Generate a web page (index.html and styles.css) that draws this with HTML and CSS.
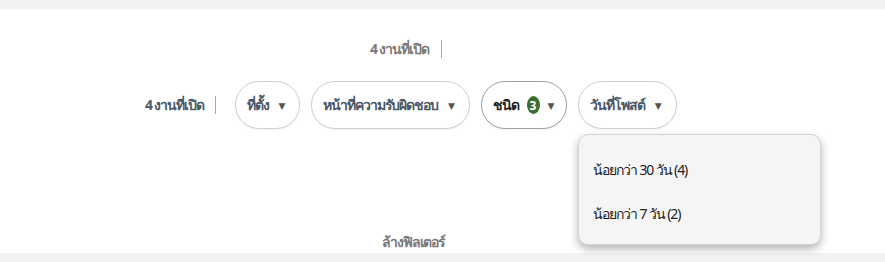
FILE: index.html
```html
<!DOCTYPE html>
<html lang="th">
<head>
    <meta charset="UTF-8">
    <title>ฟิลเตอร์งาน</title>
    <link rel="stylesheet" href="styles.css">
</head>
<body>
    <div class="band"></div>

    <div class="summary">
        <span class="count-muted">4 งานที่เปิด</span>
        <span class="divider"></span>
    </div>

    <div class="filter-bar">
        <span class="count">4 งานที่เปิด</span>
        <span class="divider"></span>

        <button class="pill">ที่ตั้ง <span class="caret">▼</span></button>
        <button class="pill">หน้าที่ความรับผิดชอบ <span class="caret">▼</span></button>
        <button class="pill pill-active"><b>ชนิด</b> <span class="badge">3</span> <span class="caret">▼</span></button>

        <div class="pill-wrap">
            <button class="pill">วันที่โพสต์ <span class="caret">▼</span></button>
            <ul class="menu">
                <li>น้อยกว่า 30 วัน (4)</li>
                <li>น้อยกว่า 7 วัน (2)</li>
            </ul>
        </div>
    </div>

    <div class="clear">ล้างฟิลเตอร์</div>

    <div class="band band-bottom"></div>
</body>
</html>
```

FILE: styles.css
```css
* {
    margin: 0;
    padding: 0;
    box-sizing: border-box;
}

body {
    width: 885px;
    height: 262px;
    background: #fff;
    font-family: 'Noto Sans', 'DejaVu Sans', sans-serif;
    font-size: 14px;
    letter-spacing: -1.1px;
    color: #333;
    position: relative;
    overflow: hidden;
}

.band {
    height: 9px;
    background: #f2f2f2;
}

.band-bottom {
    position: absolute;
    left: 0;
    right: 0;
    bottom: 0;
}

.summary {
    display: flex;
    align-items: center;
    gap: 12px;
    padding: 18px 0 0 370px;
    height: 62px;
}

.count-muted {
    color: #7a7a7a;
    font-weight: bold;
}

.divider {
    width: 1px;
    height: 18px;
    background: #aaa;
}

.filter-bar {
    display: flex;
    align-items: center;
    padding: 10px 0 0 145px;
}

.count {
    color: #4b5866;
    font-weight: bold;
}

.filter-bar .divider {
    margin: 0 19px 0 11px;
}

.pill {
    display: flex;
    align-items: center;
    gap: 10px;
    height: 48px;
    padding: 0 14px 0 11px;
    margin-right: 11px;
    border: 1.5px solid #d0d0d0;
    border-radius: 24px;
    background: #fff;
    font-family: inherit;
    font-size: 14px;
    letter-spacing: -1.1px;
    font-weight: bold;
    color: #4b5866;
    box-shadow: 0 1px 2px rgba(0, 0, 0, 0.06);
}

.pill-active {
    gap: 8px;
    padding-right: 12px;
    border-color: #a0a0a0;
    color: #222;
}

.caret {
    font-size: 9px;
    letter-spacing: 0;
    color: #555;
}

.badge {
    width: 13px;
    height: 18px;
    border-radius: 50%;
    background: #3b6e32;
    color: #fff;
    font-size: 12px;
    letter-spacing: 0;
    display: flex;
    align-items: center;
    justify-content: center;
}

.pill-wrap {
    position: relative;
}

.menu {
    position: absolute;
    top: 53px;
    left: 0;
    width: 243px;
    height: 111px;
    list-style: none;
    background: #f5f5f5;
    border: 1px solid #d5d5d5;
    border-radius: 10px;
    box-shadow: 0 4px 8px rgba(0, 0, 0, 0.3);
    padding: 24px 14px;
    display: flex;
    flex-direction: column;
    gap: 22px;
    color: #222;
    z-index: 2;
}

.clear {
    margin: 102px 0 0 382px;
    color: #7a7a7a;
    font-weight: bold;
}
```
